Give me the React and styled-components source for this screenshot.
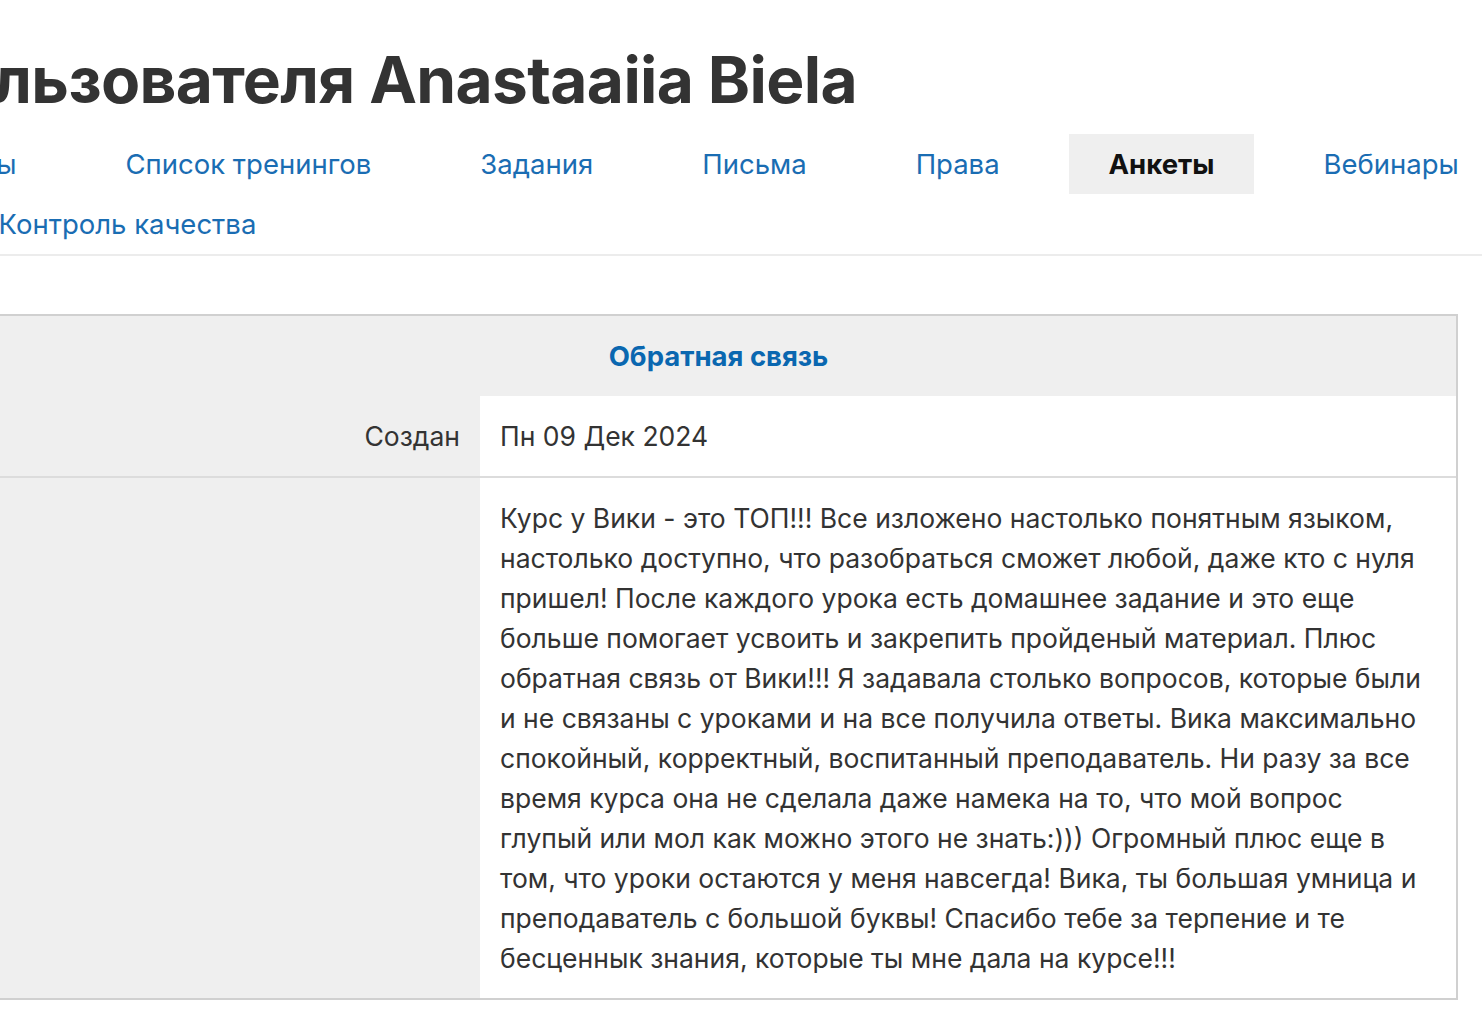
import React from 'react';
import styled, { createGlobalStyle } from 'styled-components';

const GlobalStyle = createGlobalStyle`
  html, body {
    margin: 0;
    padding: 0;
    background: #fff;
    overflow: hidden;
  }
  body {
    font-family: Inter, "Noto Sans", "DejaVu Sans", sans-serif;
    color: #333;
  }
`;

const tabs = [
  { label: 'Основное' },
  { label: 'Группы' },
  { label: 'Список тренингов' },
  { label: 'Задания' },
  { label: 'Письма' },
  { label: 'Права' },
  { label: 'Анкеты', active: true },
  { label: 'Вебинары' },
  { label: 'Личные данные' },
  { label: 'Контроль качества' },
];

// строки отзыва, как они переносятся в анкете
const feedbackLines = [
  'Курс у Вики - это ТОП!!! Все изложено настолько понятным языком,',
  'настолько доступно, что разобраться сможет любой, даже кто с нуля',
  'пришел! После каждого урока есть домашнее задание и это еще',
  'больше помогает усвоить и закрепить пройденый материал. Плюс',
  'обратная связь от Вики!!! Я задавала столько вопросов, которые были',
  'и не связаны с уроками и на все получила ответы. Вика максимально',
  'спокойный, корректный, воспитанный преподаватель. Ни разу за все',
  'время курса она не сделала даже намека на то, что мой вопрос',
  'глупый или мол как можно этого не знать:))) Огромный плюс еще в',
  'том, что уроки остаются у меня навсегда! Вика, ты большая умница и',
  'преподаватель с большой буквы! Спасибо тебе за терпение и те',
  'бесценнык знания, которые ты мне дала на курсе!!!',
];

function App() {
  return (
    <>
      <GlobalStyle />
      <Page>
        <Title>Анкеты пользователя Anastaaiia Biela</Title>
        <NavBar>
          <NavList>
            {tabs.map((t) => (
              <NavItem key={t.label} $active={t.active}>
                {t.label}
              </NavItem>
            ))}
          </NavList>
        </NavBar>
        <Panel>
          <PanelHead>Обратная связь</PanelHead>
          <Row>
            <Label>Создан</Label>
            <Value>Пн 09 Дек 2024</Value>
          </Row>
          <Row $last>
            <Label />
            <Value>{feedbackLines.join('\n')}</Value>
          </Row>
        </Panel>
      </Page>
    </>
  );
}

export default App;

const Page = styled.div`
  margin-left: -21px;
  width: 1479px;
  padding-top: 41px;
`;

const Title = styled.h1`
  margin: 0 0 16px -320px;
  font-size: 64px;
  line-height: 77px;
  font-weight: 700;
  letter-spacing: -0.01em;
  color: #333;
  white-space: nowrap;
`;

const NavBar = styled.nav`
  border-bottom: 2px solid #ececec;
  margin-right: -60px;
`;

const NavList = styled.ul`
  list-style: none;
  margin: 0 0 0 -344px;
  padding: 0;
  width: 1880px;
  display: flex;
  flex-wrap: wrap;
  column-gap: 29px;
`;

const NavItem = styled.li`
  height: 60px;
  padding: 0 40px;
  display: flex;
  align-items: center;
  font-size: 27.5px;
  color: ${(p) => (p.$active ? '#111' : '#1a6db3')};
  font-weight: ${(p) => (p.$active ? 700 : 400)};
  background: ${(p) => (p.$active ? '#efefef' : 'transparent')};
  cursor: pointer;
  white-space: nowrap;
`;

const Panel = styled.section`
  margin-top: 58px;
  border: 2px solid #d0d0d0;
  background: #efefef;
`;

const PanelHead = styled.h2`
  margin: 0;
  height: 80px;
  display: flex;
  align-items: center;
  justify-content: center;
  font-size: 27.5px;
  font-weight: 700;
  color: #0a67b0;
`;

const Row = styled.div`
  display: grid;
  grid-template-columns: 499px 1fr;
  border-bottom: ${(p) => (p.$last ? 'none' : '2px solid #dcdcdc')};
`;

const Label = styled.div`
  padding: 20px;
  text-align: right;
  font-size: 26.5px;
  line-height: 40px;
  color: #333;
`;

const Value = styled.div`
  background: #fff;
  padding: 20px;
  font-size: 26.5px;
  line-height: 40px;
  color: #333;
  white-space: pre-line;
`;
